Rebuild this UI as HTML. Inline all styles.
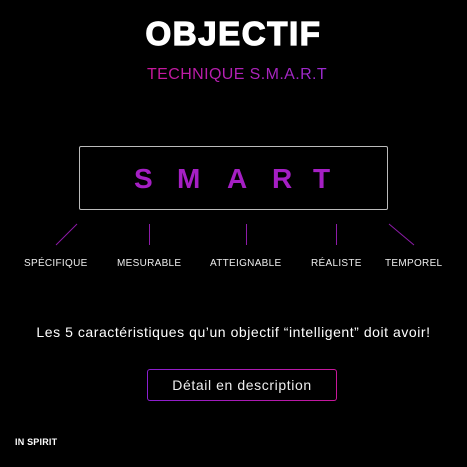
<!DOCTYPE html><html><head><style>
body{margin:0;width:467px;height:467px;background:#000;position:relative;overflow:hidden;font-family:"Liberation Sans",sans-serif;color:#fff}
.a{position:absolute;white-space:nowrap}
.lbl{position:absolute;top:258px;font-size:10px;letter-spacing:0.3px;color:#eee}
</style></head><body>
<div class="a" style="left:0;width:467px;text-align:center;top:15px;font-size:33px;font-weight:900;letter-spacing:1.6px;-webkit-text-stroke:1.3px #fff">OBJECTIF</div>
<div class="a" style="left:147px;top:66px;font-size:16px;letter-spacing:0.4px;background:linear-gradient(90deg,#c8179a,#9a2bd0);-webkit-background-clip:text;color:transparent">TECHNIQUE S.M.A.R.T</div>
<div class="a" style="left:79px;top:146px;width:307px;height:62px;border:1px solid #bbb;border-radius:2px"></div>
<div class="a" style="top:163px;font-size:28px;font-weight:bold;color:#a51fc4">
<span class="a" style="left:134px">S</span><span class="a" style="left:177px">M</span><span class="a" style="left:227px">A</span><span class="a" style="left:272px">R</span><span class="a" style="left:313px">T</span></div>
<svg class="a" style="left:0;top:0" width="467" height="467"><g stroke="#8d1ba8" stroke-width="1"><line x1="77" y1="224" x2="56" y2="245"/><line x1="149.5" y1="224" x2="149.5" y2="245"/><line x1="246.5" y1="224" x2="246.5" y2="245"/><line x1="336.5" y1="224" x2="336.5" y2="245"/><line x1="389" y1="224" x2="414" y2="245"/></g></svg>
<div class="lbl" style="left:24px">SPÉCIFIQUE</div>
<div class="lbl" style="left:117px">MESURABLE</div>
<div class="lbl" style="left:210px">ATTEIGNABLE</div>
<div class="lbl" style="left:311px">RÉALISTE</div>
<div class="lbl" style="left:385px">TEMPOREL</div>
<div class="a" style="left:0;width:467px;text-align:center;top:324px;font-size:14px;letter-spacing:0.55px">Les 5 caractéristiques qu’un objectif “intelligent” doit avoir!</div>
<div class="a" style="left:147px;top:369px;width:190px;height:32px;border-radius:3px;background:linear-gradient(90deg,#8a1fd0,#c8179a);padding:0"><div style="margin:1px;height:30px;background:#000;border-radius:2px;text-align:center;line-height:30px;font-size:14px;letter-spacing:0.6px;color:#eee">Détail en description</div></div>
<div class="a" style="left:15px;top:437px;font-size:9px;font-weight:900;letter-spacing:0.2px">IN SPIRIT</div>
</body></html>
